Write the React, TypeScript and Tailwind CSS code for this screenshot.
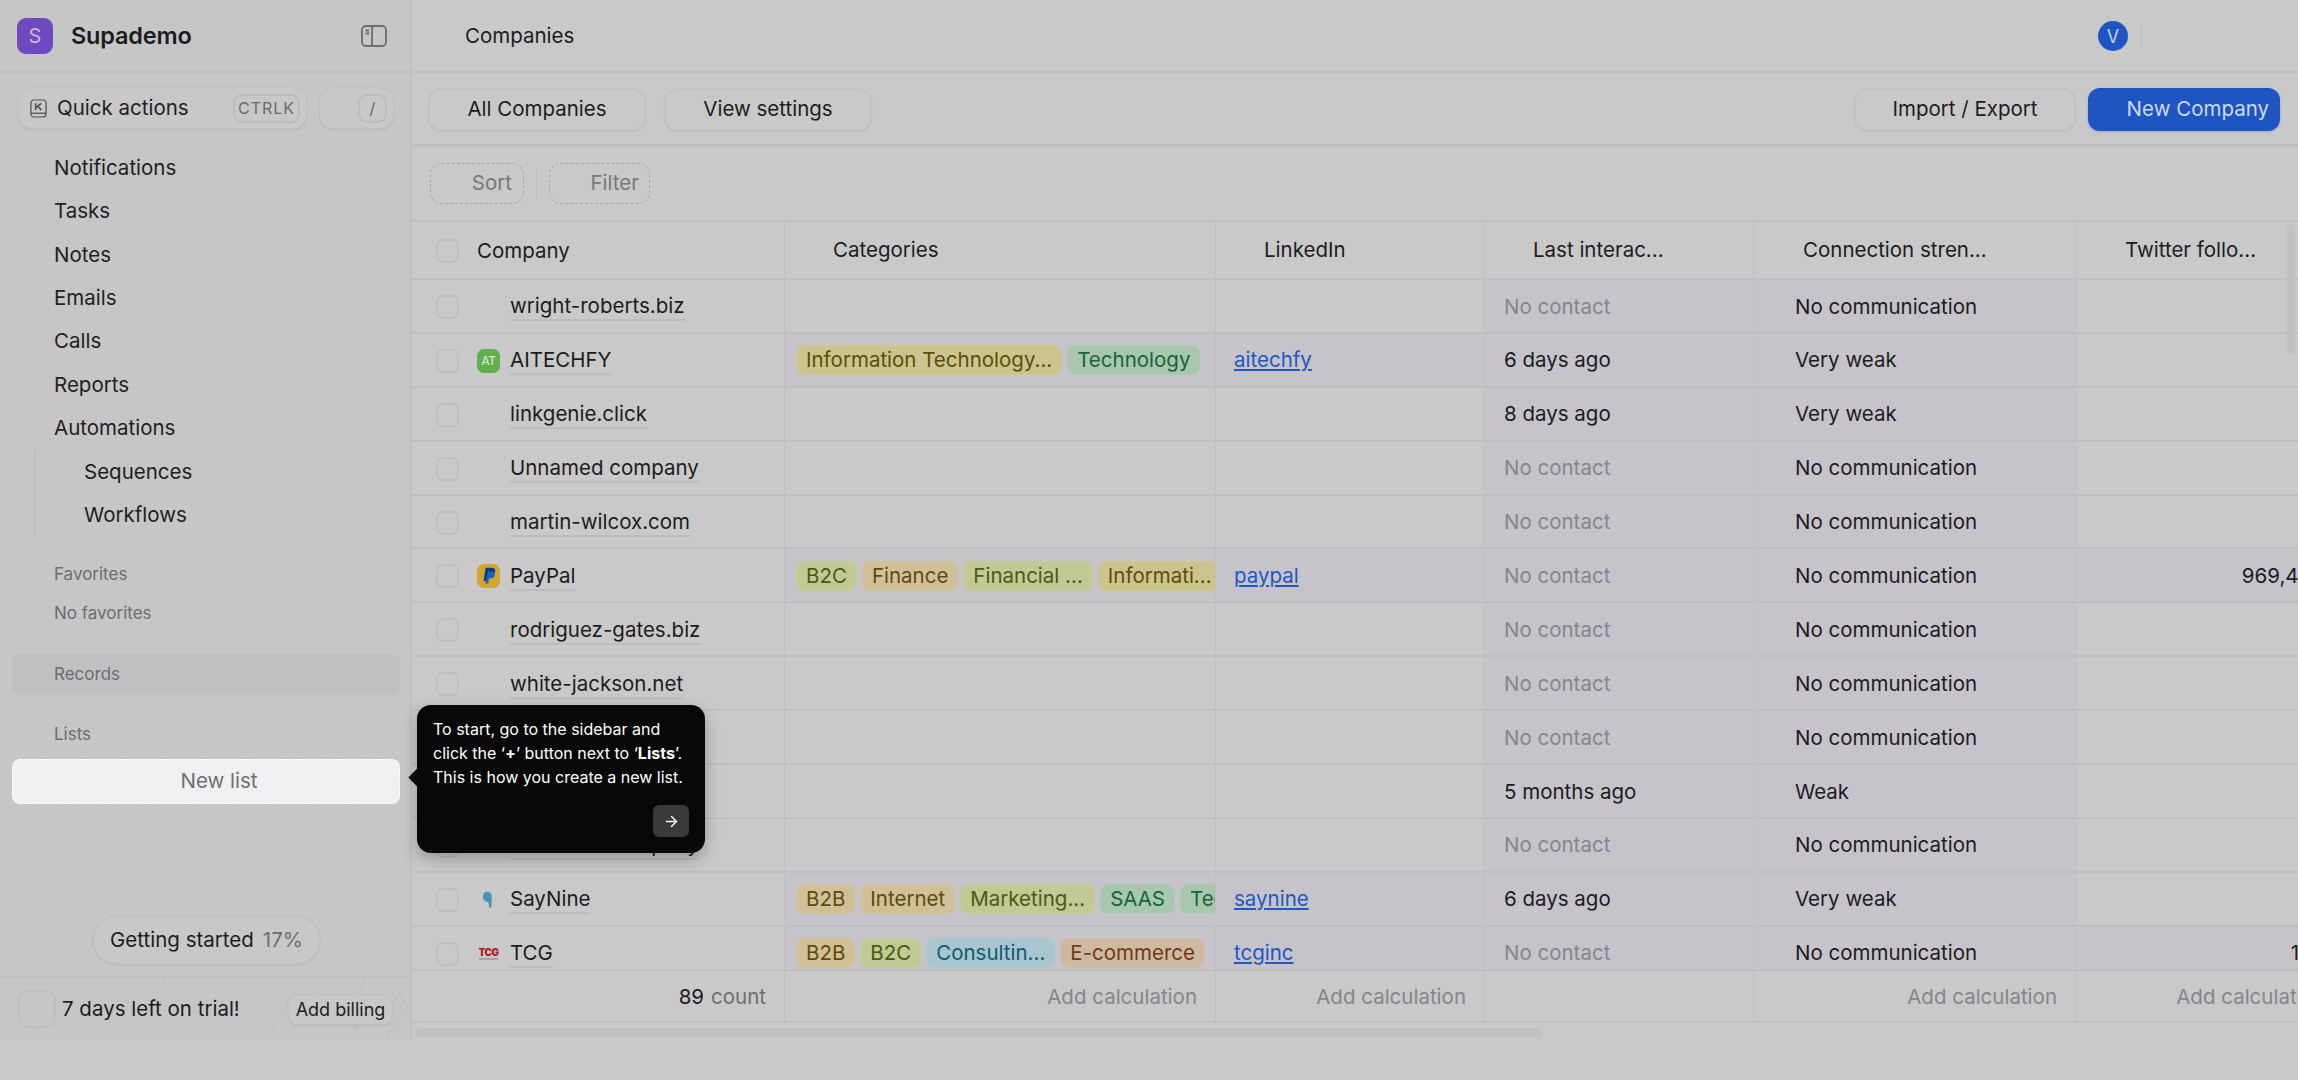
import React from "react";
import { ArrowRight } from "lucide-react";

type Tone = "yellow" | "green" | "lime" | "orange" | "blue" | "peach";
const toneClass: Record<Tone, string> = {
  yellow: "bg-[#cbc48e] border-[#d2ca86] text-[#5c4d08]",
  green: "bg-[#a9c6ae] border-[#a9cdb1] text-[#15643d]",
  lime: "bg-[#c1c997] border-[#c4d090] text-[#4b5a10]",
  orange: "bg-[#cfc099] border-[#d5c493] text-[#624a08]",
  blue: "bg-[#a9c5cf] border-[#a8cad6] text-[#0d5c6f]",
  peach: "bg-[#cfb9a3] border-[#d5bda6] text-[#6f3a12]",
};

type Row = {
  name: string;
  icon?: "at" | "paypal" | "saynine" | "tcg";
  chips?: [string, Tone][];
  link?: string;
  last: string;
  strength: string;
  twitter?: string;
};

const rows: Row[] = [
  { name: "wright-roberts.biz", last: "No contact", strength: "No communication" },
  {
    name: "AITECHFY",
    icon: "at",
    chips: [["Information Technology...", "yellow"], ["Technology", "green"]],
    link: "aitechfy",
    last: "6 days ago",
    strength: "Very weak",
  },
  { name: "linkgenie.click", last: "8 days ago", strength: "Very weak" },
  { name: "Unnamed company", last: "No contact", strength: "No communication" },
  { name: "martin-wilcox.com", last: "No contact", strength: "No communication" },
  {
    name: "PayPal",
    icon: "paypal",
    chips: [["B2C", "lime"], ["Finance", "orange"], ["Financial ...", "lime"], ["Informati...", "yellow"]],
    link: "paypal",
    last: "No contact",
    strength: "No communication",
    twitter: "969,412",
  },
  { name: "rodriguez-gates.biz", last: "No contact", strength: "No communication" },
  { name: "white-jackson.net", last: "No contact", strength: "No communication" },
  { name: "Unnamed company", last: "No contact", strength: "No communication" },
  { name: "Unnamed company", last: "5 months ago", strength: "Weak" },
  { name: "Unnamed company", last: "No contact", strength: "No communication" },
  {
    name: "SayNine",
    icon: "saynine",
    chips: [["B2B", "orange"], ["Internet", "orange"], ["Marketing...", "lime"], ["SAAS", "green"], ["Technology", "green"]],
    link: "saynine",
    last: "6 days ago",
    strength: "Very weak",
  },
  {
    name: "TCG",
    icon: "tcg",
    chips: [["B2B", "orange"], ["B2C", "lime"], ["Consultin...", "blue"], ["E-commerce", "peach"]],
    link: "tcginc",
    last: "No contact",
    strength: "No communication",
    twitter: "171",
  },
];

const cols = "grid grid-cols-[373px_431px_269px_269px_322px_269px] w-[1933px]";
const cellBorder = "border-r border-[#bfbfbf]";

function CompanyIcon({ kind }: { kind?: Row["icon"] }) {
  if (kind === "at")
    return (
      <span className="w-[23px] h-[24px] rounded-[7px] bg-[#62ad4c] text-[#d5e8cf] text-[12px] tracking-[-0.5px] font-medium flex items-center justify-center">
        AT
      </span>
    );
  if (kind === "paypal")
    return (
      <span className="w-[23px] h-[24px] rounded-[7px] bg-[#d1a52e] flex items-center justify-center">
        <svg viewBox="0 0 24 24" className="w-[20px] h-[20px]">
          <path d="M8 2h7c3.500 0 5 2.200 4.300 5.200C18.600 10.500 16 12 13 12h-2l-1 6H5.500z" fill="#0a3a86" />
          <path d="M10.500 7h6c1.500 0 3 1.500 2.500 3.500-.7 3-3 4.500-5.500 4.500H12l-1 6H7.500z" fill="#1763c0" />
        </svg>
      </span>
    );
  if (kind === "saynine")
    return (
      <span className="w-[23px] h-[24px] flex items-center justify-center">
        <svg viewBox="0 0 24 24" className="w-[24px] h-[24px]">
          <path d="M8 4c3-1.500 7-.5 7.500 3l-.5 12c-.2 1.500-2 1.500-2.500 0l-.5-5C8.500 14 6 11.500 6.200 8.500 6.300 6.500 7 5 8 4z" fill="#4b93b4" />
        </svg>
      </span>
    );
  if (kind === "tcg")
    return (
      <span className="w-[23px] h-[24px] flex flex-col items-center justify-center leading-none">
        <span className="text-[10px] font-black text-[#a81c22] tracking-[-0.5px] leading-[9px]">TCG</span>
        <span className="w-[19px] h-[2px] mt-[1px] bg-[#a9a2a2]" />
      </span>
    );
  return <span className="w-[23px] h-[24px]" />;
}

function Checkbox() {
  return <span className="w-[23px] h-[24px] rounded-[7px] border-2 border-[#bfbfbf] shrink-0" />;
}

function Chip({ text, tone }: { text: string; tone: Tone }) {
  return (
    <span className={`shrink-0 h-[30px] flex items-center px-[9px] rounded-[8px] border ${toneClass[tone]}`}>{text}</span>
  );
}

function TableRow({ r }: { r: Row }) {
  const hi = "bg-[#c6c4ca]";
  return (
    <div className={`${cols} h-[53.9px] border-b-2 border-[#bfbfbf] text-[#1c1c20]`}>
      <div className={`${cellBorder} pt-[2px] flex items-center pl-[24px] gap-[18px]`}>
        <Checkbox />
        <div className="flex items-center gap-[10px]">
          <CompanyIcon kind={r.icon} />
          <span className="border-b-2 border-[#bdbdbd] leading-[27px] whitespace-nowrap">{r.name}</span>
        </div>
      </div>
      <div className={`${cellBorder} pt-[1px] flex items-center gap-[5px] pl-[11px] overflow-hidden ${r.chips ? hi : ""}`}>
        {r.chips?.map(([t, tone]) => <Chip key={t} text={t} tone={tone} />)}
      </div>
      <div className={`${cellBorder} pt-[1px] flex items-center pl-[18px] ${r.link ? hi : ""}`}>
        {r.link && <span className="text-[#2158c4] underline underline-offset-2">{r.link}</span>}
      </div>
      <div className={`${cellBorder} pt-[2px] flex items-center pl-[19px] ${hi} ${r.last === "No contact" ? "text-[#85858b]" : ""}`}>
        {r.last}
      </div>
      <div className={`${cellBorder} pt-[2px] flex items-center pl-[41px] ${hi}`}>{r.strength}</div>
      <div className={`pt-[2px] flex items-center justify-end pr-[26px] ${r.twitter ? hi : ""}`}>{r.twitter}</div>
    </div>
  );
}

function NavItem({ label, sub }: { label: string; sub?: boolean }) {
  return <div className={`h-[43.4px] flex items-center text-[#1f1f22] ${sub ? "pl-[84px]" : "pl-[54px]"}`}>{label}</div>;
}

export default function App() {
  const headers = [
    { t: "Categories", c: "pl-[48px]" },
    { t: "LinkedIn", c: "pl-[48px]" },
    { t: "Last interac...", c: "pl-[48px]" },
    { t: "Connection stren...", c: "pl-[49px]" },
    { t: "Twitter follo...", c: "pl-[49px]" },
  ];
  return (
    <div className="w-[2298px] h-[1080px] overflow-hidden bg-[#c9c9c9] text-[20.5px] text-[#1c1c20] font-['Inter',sans-serif] relative">
      <div className="h-[1040px] flex">
        {/* Sidebar */}
        <aside className="w-[412px] shrink-0 h-full bg-[#c6c6c6] border-r-2 border-[#bfbfbf] flex flex-col">
          <div className="h-[73px] shrink-0 border-b-2 border-[#bfbfbf] flex items-center pl-[17px] pr-[23px] pt-[1px]">
            <span className="w-[36px] h-[36px] rounded-[9px] bg-[#7048c0] text-[#c6b8e4] text-[20px] flex items-center justify-center">S</span>
            <span className="ml-[18px] text-[23.5px] font-semibold text-[#1c1c20] tracking-[-0.2px]">Supademo</span>
            <svg viewBox="0 0 26 22" className="ml-auto w-[26px] h-[22px]" fill="none" stroke="#6d6d70" strokeWidth="1.800">
              <rect x="1" y="1" width="24" height="20" rx="4" />
              <path d="M11 1v20M4.500 5.500h3.500M4.500 8.500h3.500" />
            </svg>
          </div>
          <div className="flex gap-[12px] pl-[18px] pt-[14px]">
            <div className="w-[289px] h-[42px] rounded-[14px] bg-[#c8c8c8] border border-[#c2c2c2] shadow-[0_1px_2px_#b5b5b5] flex items-center pl-[11px] pr-[6px]">
              <svg viewBox="0 0 18 20" className="w-[17px] h-[19px]" fill="none" stroke="#4e4e52" strokeWidth="1.300">
                <rect x="1" y="1" width="16" height="18" rx="3.500" />
                <path d="M1 15h16" />
                <path d="M6 4.500v7M12 4.500 6.200 9M8.200 7.600 12 11.500" strokeWidth="1.700" />
              </svg>
              <span className="ml-[10px] text-[#1f1f22]">Quick actions</span>
              <span className="ml-auto h-[29px] w-[67px] rounded-[9px] border-2 border-[#bcbcbc] text-[16px] tracking-[1px] text-[#6a6a6d] flex items-center justify-center">CTRLK</span>
            </div>
            <div className="w-[75px] h-[42px] rounded-[14px] bg-[#c8c8c8] border border-[#c2c2c2] shadow-[0_1px_2px_#b5b5b5] flex items-center justify-end pr-[6px]">
              <span className="h-[29px] w-[29px] rounded-[9px] border-2 border-[#bcbcbc] text-[16px] text-[#6a6a6d] flex items-center justify-center">/</span>
            </div>
          </div>
          <nav className="pt-[17.500px]">
            {["Notifications", "Tasks", "Notes", "Emails", "Calls", "Reports", "Automations"].map((l) => (
              <NavItem key={l} label={l} />
            ))}
            <div className="ml-[34px] border-l-2 border-[#bdbdbd]">
              <div className="-ml-[36px]">
                <NavItem label="Sequences" sub />
                <NavItem label="Workflows" sub />
              </div>
            </div>
          </nav>
          <div className="text-[17px] text-[#6c6c70]">
            <div className="pl-[54px] pt-[24px] leading-[26px]">Favorites</div>
            <div className="pl-[54px] pt-[13px] leading-[26px]">No favorites</div>
            <div className="mt-[28px] ml-[12px] mr-[10px] h-[41px] rounded-[8px] bg-[#bfc0c2] pl-[42px] flex items-center">Records</div>
            <div className="pl-[54px] pt-[26px] leading-[26px]">Lists</div>
            <div className="mt-[12px] ml-[12px] mr-[10px] h-[45px] rounded-[8px] bg-[#eff0f2] border border-dashed border-[#ffffff] flex items-center justify-center text-[20.5px] text-[#6f6f74] pl-[26px]">
              New list
            </div>
          </div>
          <div className="mt-auto flex justify-center pl-[3px] pb-[12px]">
            <div className="h-[48px] w-[227px] rounded-full bg-[#c8c8c8] border border-[#c0c0c0] shadow-[0_1px_3px_#b5b5b5] flex items-center justify-center gap-[9px]">
              <span>Getting started</span>
              <span className="text-[#6e6e72]">17%</span>
            </div>
          </div>
          <div className="h-[64px] shrink-0 border-t-2 border-[#bfbfbf] relative flex items-center pl-[18px] pr-[17px] overflow-hidden">
            <svg viewBox="0 0 409 62" className="absolute inset-0 w-full h-full" fill="none" stroke="#b9bec8" strokeWidth="1">
              <path d="M165 0l-17 31 19 31M238 0l-20 31 21 31M292 0l-33 62M300 0l-33 62M322 0l-24 46M365 0l-17 38 14 24M392 0l15 31-15 31M382 0l20 31-16 31" />
            </svg>
            <span className="relative w-[38px] h-[38px] rounded-[10px] border-2 border-[#bfbfbf]" />
            <span className="relative ml-[6px] whitespace-nowrap">7 days left on trial!</span>
            <span className="relative ml-auto h-[31px] w-[105px] rounded-[9px] bg-[#c8c8c8] border border-[#c0c0c0] shadow-[0_1px_2px_#b5b5b5] text-[18px] flex items-center justify-center">Add billing</span>
          </div>
        </aside>

        {/* Main */}
        <main className="flex-1 min-w-0 flex flex-col">
          <div className="h-[73px] shrink-0 border-b-2 border-[#bfbfbf] flex items-center pl-[53px] pt-[1px]">
            <span className="w-[1633px] whitespace-nowrap">Companies</span>
            <span className="w-[30px] h-[30px] rounded-full bg-[#1f55c0] text-[#c3d2ee] text-[18px] flex items-center justify-center">V</span>
            <span className="ml-[13px] w-[1px] h-[22px] bg-[#bdbdbd]" />
          </div>
          <div className="h-[74px] shrink-0 border-b-[3px] border-[#bfbfbf] flex items-center pl-[16px] pr-[18px] gap-[18px] pt-[2px]">
            <span className="h-[43px] w-[218px] rounded-[14px] border-2 border-[#c2c2c2] shadow-[0_1px_2px_#bababa] flex items-center justify-center">All Companies</span>
            <span className="h-[43px] w-[208px] rounded-[14px] border-2 border-[#c2c2c2] shadow-[0_1px_2px_#bababa] flex items-center justify-center">View settings</span>
            <span className="ml-auto h-[43px] w-[222px] rounded-[14px] border-2 border-[#c2c2c2] shadow-[0_1px_2px_#bababa] flex items-center justify-center">Import / Export</span>
            <span className="-ml-[6px] h-[43px] w-[192px] rounded-[12px] bg-[#1f55c0] text-[#cdd9ef] shadow-[0_1px_3px_#9aa5c0] flex items-center justify-end pr-[11px]">New Company</span>
          </div>
          <div className="h-[75px] shrink-0 border-b-2 border-[#bfbfbf] flex items-center pl-[18px]">
            <span className="h-[41px] w-[94px] rounded-[12px] border border-dashed border-[#a9a9a9] flex items-center justify-end pr-[11px] text-[#78787c]">Sort</span>
            <span className="mx-[12px] w-[1px] h-[30px] bg-[#bdbdbd]" />
            <span className="h-[41px] w-[101px] rounded-[12px] border border-dashed border-[#a9a9a9] flex items-center justify-end pr-[10px] text-[#78787c]">Filter</span>
          </div>

          <div className="flex-1 min-h-0 overflow-hidden relative">
            <div className={`${cols} h-[58px] border-b-2 border-[#bfbfbf]`}>
              <div className={`${cellBorder} pt-[2px] flex items-center pl-[24px] gap-[18px]`}>
                <Checkbox />
                Company
              </div>
              {headers.map((h, i) => (
                <div key={h.t} className={`pt-[1px] flex items-center ${h.c} ${i < 4 ? cellBorder : ""}`}>{h.t}</div>
              ))}
            </div>
            <div className="h-[689px] overflow-hidden">
              {rows.map((r, i) => <TableRow key={i} r={r} />)}
            </div>
            <div className={`${cols} h-[54px] border-y-2 border-[#bfbfbf] text-[#85858b]`}>
              <div className={`${cellBorder} pt-[2px] flex items-center justify-end pr-[18px]`}>
                <span className="text-[#1c1c20]">89</span>
                <span className="ml-[7px] text-[#6e6e72]">count</span>
              </div>
              <div className={`${cellBorder} pt-[2px] flex items-center justify-end pr-[18px]`}>Add calculation</div>
              <div className={`${cellBorder} pt-[2px] flex items-center justify-end pr-[18px]`}>Add calculation</div>
              <div className={cellBorder} />
              <div className={`${cellBorder} pt-[2px] flex items-center justify-end pr-[18px]`}>Add calculation</div>
              <div className="pt-[2px] flex items-center justify-end pr-[19px]">Add calculation</div>
            </div>
            <div className="mt-[5px] ml-[3px] w-[1128px] h-[10px] rounded-full bg-[#c0c1c3]" />
            <div className="absolute right-[3px] top-[2px] w-[8px] h-[130px] rounded-full bg-[#c0c1c3]" />
          </div>
        </main>
      </div>

      {/* Tour tooltip */}
      <div className="absolute left-[417px] top-[705px] w-[288px] h-[148px] rounded-[14px] bg-[#080808] text-white shadow-[0_6px_16px_rgba(0,0,0,0.25)] pt-[12px] pl-[16px] pr-[12px] text-[16px] leading-[24px]">
        <span className="absolute -left-[6px] top-[66px] w-[13px] h-[13px] rotate-45 bg-[#080808]" />
        <p className="relative whitespace-nowrap">
          To start, go to the sidebar and
          <br />
          click the ‘<b>+</b>’ button next to ‘<b>Lists</b>’.
          <br />
          This is how you create a new list.
        </p>
        <span className="absolute right-[16px] bottom-[16px] w-[36px] h-[32px] rounded-[6px] bg-[#3a3a3a] flex items-center justify-center">
          <ArrowRight size={17} color="#ffffff" />
        </span>
      </div>
    </div>
  );
}
